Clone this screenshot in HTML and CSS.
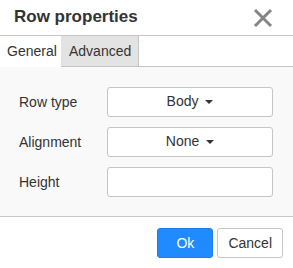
FILE: index.html
```html
<!DOCTYPE html>
<html lang="en">
<head>
  <meta charset="UTF-8" />
  <meta name="viewport" content="width=device-width, initial-scale=1" />
  <link rel="stylesheet" href="styles.css">
</head>
<body>

  <div class="dialog">
    <!-- Title bar -->
    <div class="dialog-head">
      <span class="dialog-title">Row properties</span>
      <button class="close-btn" aria-label="Close">
        <svg width="20" height="20" viewBox="0 0 20 20">
          <path d="M2 2 L18 18 M18 2 L2 18" stroke="#858585" stroke-width="3" fill="none" />
        </svg>
      </button>
    </div>

    <!-- Tabs -->
    <div class="tabs">
      <div class="tab active">General</div>
      <div class="tab">Advanced</div>
      <div class="tab-fill"></div>
    </div>

    <!-- Form -->
    <div class="panel">
      <div class="form-row">
        <label class="form-label">Row type</label>
        <button class="select-btn">Body <span class="caret"></span></button>
      </div>
      <div class="form-row">
        <label class="form-label">Alignment</label>
        <button class="select-btn">None <span class="caret"></span></button>
      </div>
      <div class="form-row">
        <label class="form-label">Height</label>
        <input class="text-input" type="text" />
      </div>
    </div>

    <!-- Footer -->
    <div class="dialog-foot">
      <button class="btn primary">Ok</button>
      <button class="btn">Cancel</button>
    </div>
  </div>

</body>
</html>
```

FILE: styles.css
```css
body {
  margin: 0;
  padding: 0;
  background-color: #ffffff;
  font-family: 'Liberation Sans', Arial, sans-serif;
  color: #333333;
}

.dialog {
  width: 293px;
  background-color: #ffffff;
}

.dialog-head {
  display: flex;
  justify-content: space-between;
  align-items: center;
  height: 35px;
  padding: 0 20px 0 14px;
  border-bottom: 1px solid #c5c5c5;
}

.dialog-title {
  font-size: 17px;
  font-weight: bold;
  color: #333333;
  margin-top: -1px;
}

.close-btn {
  background: none;
  border: none;
  padding: 0;
  width: 20px;
  height: 20px;
  cursor: pointer;
  display: flex;
}

.tabs {
  display: flex;
  height: 31px;
}

.tab {
  padding: 0 7px 0 8px;
  font-size: 14px;
  line-height: 30px;
  color: #333333;
  background-color: #e3e3e3;
  border-right: 1px solid #c5c5c5;
  border-bottom: 1px solid #c5c5c5;
}

.tab.active {
  background-color: #ffffff;
  border-bottom-color: transparent;
  width: 47px;
  padding: 0 7px;
  border-right: none;
}

.tab-fill {
  flex: 1;
  border-bottom: 1px solid #c5c5c5;
}

.panel {
  background-color: #f9f9f9;
  padding: 20px 20px 19px 19px;
  display: flex;
  flex-direction: column;
  gap: 10px;
  border-bottom: 1px solid #c5c5c5;
}

.form-row {
  display: flex;
  align-items: center;
}

.form-label {
  flex-shrink: 0;
  width: 88px;
  font-size: 14px;
  color: #333333;
}

.select-btn,
.text-input {
  box-sizing: border-box;
  width: 166px;
  height: 30px;
  margin: 0;
  border: 1px solid #c5c5c5;
  border-radius: 3px;
  background-color: #ffffff;
  font-family: 'Liberation Sans', Arial, sans-serif;
  font-size: 14px;
  color: #333333;
}

.select-btn {
  padding: 0 0 2px 0;
  text-align: center;
}

.text-input {
  padding: 0 6px;
}

.caret {
  display: inline-block;
  width: 0;
  height: 0;
  margin-left: 3px;
  vertical-align: middle;
  border-left: 4px solid transparent;
  border-right: 4px solid transparent;
  border-top: 4px solid #333333;
}

.dialog-foot {
  display: flex;
  justify-content: flex-end;
  gap: 4px;
  padding: 11px 10px 9px 10px;
}

.btn {
  height: 30px;
  padding: 0 10px;
  margin: 0;
  font-family: 'Liberation Sans', Arial, sans-serif;
  font-size: 14px;
  color: #333333;
  background-color: #ffffff;
  border: 1px solid #c5c5c5;
  border-radius: 3px;
}

.btn.primary {
  width: 56px;
  color: #ffffff;
  background-color: #208bff;
  border-color: #1c7fe8;
}
```
